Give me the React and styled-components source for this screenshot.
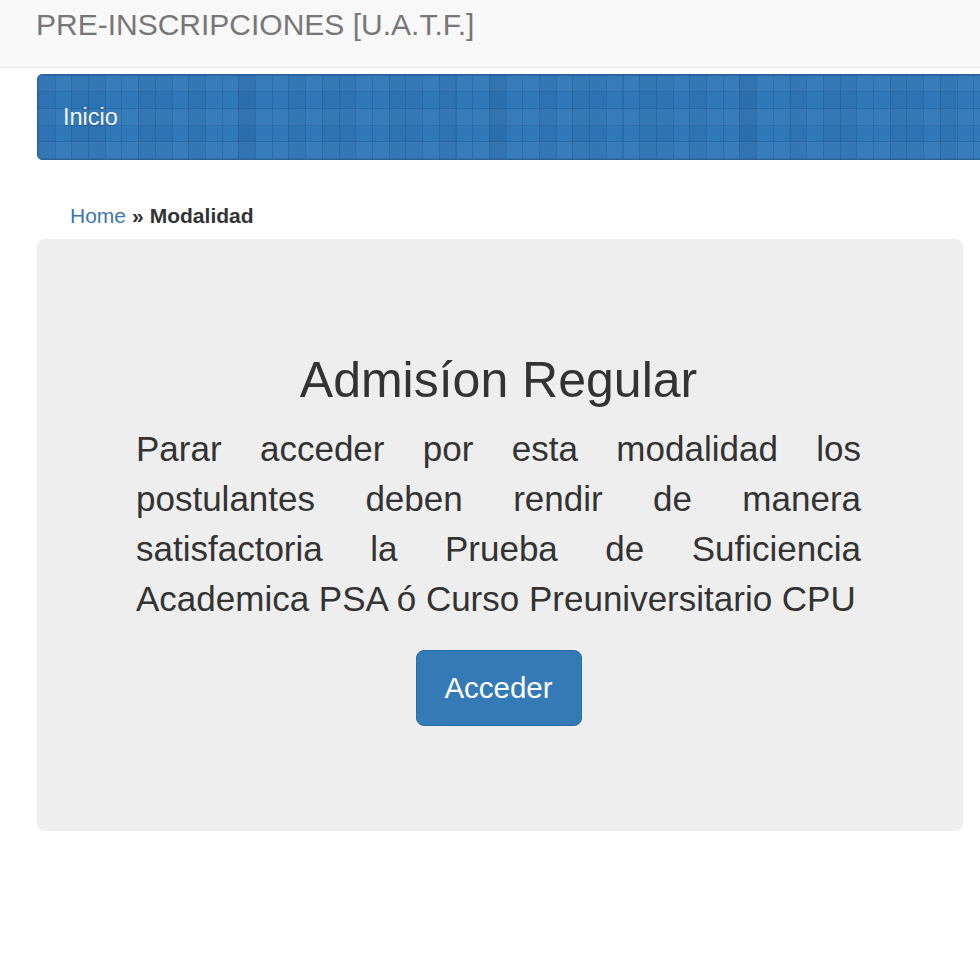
import React from "react";
import styled, { createGlobalStyle } from "styled-components";

const Global = createGlobalStyle`
  html, body { margin: 0; padding: 0; background: #ffffff; }
  body { font-family: "Liberation Sans", Arial, sans-serif; color: #333; overflow-x: hidden; }
  #root { overflow: hidden; }
`;

const Navbar = styled.header`
  height: 68px;
  background: #f8f8f8;
  border-bottom: 1px solid #e7e7e7;
  display: flex;
  align-items: center;
  padding-left: 36px;
  box-sizing: border-box;
`;

const Brand = styled.div`
  font-size: 30px;
  color: #777;
  line-height: 1;
  margin-top: -17px;
`;

const Page = styled.main`
  padding-left: 37px;
  padding-right: 17px;
`;

const MenuBar = styled.nav`
  margin-top: 6px;
  margin-right: -40px;
  height: 86px;
  box-sizing: border-box;
  border: 1px solid #2b639a;
  border-radius: 5px;
  display: flex;
  align-items: center;
  padding-left: 25px;
  background-color: #2f78b9;
  background-image:
    repeating-linear-gradient(90deg, rgba(20, 60, 110, 0.22) 0 1px, transparent 1px 16.7px),
    repeating-linear-gradient(0deg, rgba(20, 60, 110, 0.22) 0 1px, transparent 1px 16.7px),
    repeating-linear-gradient(90deg, rgba(0, 30, 80, 0.06) 0 16.7px, transparent 16.7px 50.1px),
    repeating-linear-gradient(0deg, rgba(255, 255, 255, 0.04) 0 16.7px, transparent 16.7px 33.4px),
    repeating-linear-gradient(90deg, transparent 0 33.4px, rgba(0, 30, 80, 0.05) 33.4px 50.1px, transparent 50.1px 83.5px);
`;

const MenuItem = styled.a`
  color: #f2f6fb;
  font-size: 23.5px;
  text-decoration: none;
  text-shadow: 0 1px 1px rgba(0, 0, 0, 0.25);
`;

const Breadcrumb = styled.div`
  display: flex;
  align-items: center;
  gap: 6px;
  height: 79px;
  padding-left: 33px;
  padding-top: 32px;
  box-sizing: border-box;
  font-size: 21px;
`;

const Crumb = styled.a`
  color: ${(p) => (p.$active ? "#333" : "#3d76ad")};
  font-weight: ${(p) => (p.$active ? "bold" : "normal")};
  text-decoration: none;
`;

const Sep = styled.span`
  color: #333;
  font-weight: bold;
`;

const Jumbotron = styled.section`
  width: 926px;
  box-sizing: border-box;
  background: #eeeeee;
  border-radius: 8px;
  padding: 111px 102px 105px 99px;
  display: flex;
  flex-direction: column;
  align-items: center;
`;

const Title = styled.h1`
  margin: 0;
  font-size: 50px;
  line-height: 60px;
  font-weight: normal;
  color: #333;
`;

const Lead = styled.p`
  margin: 14px 0 0;
  width: 100%;
  font-size: 35px;
  line-height: 50px;
  text-align: justify;
  color: #333;
`;

const Button = styled.a`
  margin-top: 26px;
  width: 166px;
  height: 76px;
  box-sizing: border-box;
  display: flex;
  align-items: center;
  justify-content: center;
  background: #337ab7;
  border: 1px solid #2e6da4;
  border-radius: 8px;
  color: #ffffff;
  font-size: 29.5px;
  text-decoration: none;
`;

export default function App() {
  return (
    <>
      <Global />
      <Navbar>
        <Brand>PRE-INSCRIPCIONES [U.A.T.F.]</Brand>
      </Navbar>
      <Page>
        <MenuBar>
          <MenuItem href="#">Inicio</MenuItem>
        </MenuBar>
        <Breadcrumb>
          <Crumb href="#">Home</Crumb>
          <Sep>»</Sep>
          <Crumb $active>Modalidad</Crumb>
        </Breadcrumb>
        <Jumbotron>
          <Title>Admisíon Regular</Title>
          <Lead>
            Parar acceder por esta modalidad los postulantes deben rendir de
            manera satisfactoria la Prueba de Suficiencia Academica PSA ó Curso
            Preuniversitario CPU
          </Lead>
          <Button href="#">Acceder</Button>
        </Jumbotron>
      </Page>
    </>
  );
}
